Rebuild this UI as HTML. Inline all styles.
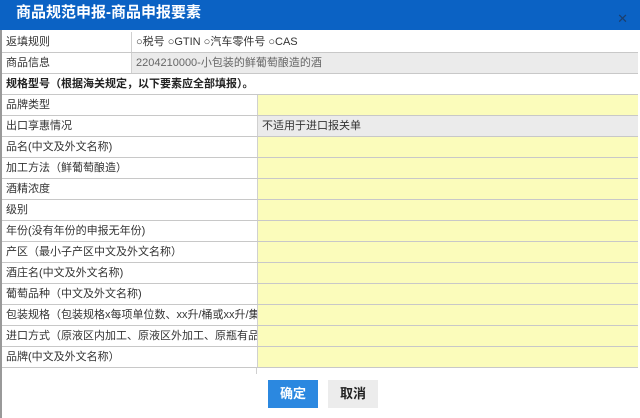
<!DOCTYPE html><html><head><meta charset="utf-8"><style>
body{margin:0;width:640px;height:418px;background:#fff;font-family:"Liberation Sans","Noto Sans CJK SC",sans-serif;font-size:11px;color:#333;position:relative;overflow:hidden}
.t{position:absolute;left:0;top:0;width:640px;height:30px;background:#0b62c4;color:#fff;font-size:15px;font-weight:bold;line-height:26px;text-indent:16px}
.x{position:absolute;right:12px;top:6px;color:#1c3f6e;font-size:13px;font-weight:normal}
.r{position:absolute;left:2px;width:636px;height:20px;border-bottom:1px solid #c8c8c8;line-height:20px}
.r span{position:absolute;top:0;height:20px;padding-left:4px;box-sizing:border-box}
.a{left:0;border-right:1px solid #d0d0d0}
.y{background:#fbfcbb}.g{background:#ebebeb}
.b{position:absolute;top:380px;height:28px;width:50px;line-height:28px;text-align:center;font-size:13px;font-weight:bold}
</style></head><body>
<div class="t">商品规范申报-商品申报要素<span class="x">✕</span></div>
<div style="position:absolute;left:0;top:30px;width:2px;height:388px;background:#999"></div>
<div class="r" style="top:32px"><span class="a" style="width:130px">返填规则</span><span style="left:130px">○税号 ○GTIN ○汽车零件号 ○CAS</span></div>
<div class="r" style="top:53px"><span class="a" style="width:130px">商品信息</span><span class="g" style="left:130px;width:506px;color:#666">2204210000-小包装的鲜葡萄酿造的酒</span></div>
<div class="r" style="top:74px;font-weight:bold;color:#222"><span>规格型号（根据海关规定，以下要素应全部填报）。</span></div>
<div class="r" style="top:95px"><span class="a" style="width:256px">品牌类型</span><span class="y" style="left:256px;width:380px"></span></div>
<div class="r" style="top:116px"><span class="a" style="width:256px">出口享惠情况</span><span class="g" style="left:256px;width:380px">不适用于进口报关单</span></div>
<div class="r" style="top:137px"><span class="a" style="width:256px">品名(中文及外文名称)</span><span class="y" style="left:256px;width:380px"></span></div>
<div class="r" style="top:158px"><span class="a" style="width:256px">加工方法（鲜葡萄酿造）</span><span class="y" style="left:256px;width:380px"></span></div>
<div class="r" style="top:179px"><span class="a" style="width:256px">酒精浓度</span><span class="y" style="left:256px;width:380px"></span></div>
<div class="r" style="top:200px"><span class="a" style="width:256px">级别</span><span class="y" style="left:256px;width:380px"></span></div>
<div class="r" style="top:221px"><span class="a" style="width:256px">年份(没有年份的申报无年份)</span><span class="y" style="left:256px;width:380px"></span></div>
<div class="r" style="top:242px"><span class="a" style="width:256px">产区（最小子产区中文及外文名称）</span><span class="y" style="left:256px;width:380px"></span></div>
<div class="r" style="top:263px"><span class="a" style="width:256px">酒庄名(中文及外文名称)</span><span class="y" style="left:256px;width:380px"></span></div>
<div class="r" style="top:284px"><span class="a" style="width:256px">葡萄品种（中文及外文名称)</span><span class="y" style="left:256px;width:380px"></span></div>
<div class="r" style="top:305px"><span class="a" style="width:256px;overflow:hidden;white-space:nowrap">包装规格（包装规格x每项单位数、xx升/桶或xx升/集装</span><span class="y" style="left:256px;width:380px"></span></div>
<div class="r" style="top:326px"><span class="a" style="width:256px;overflow:hidden;white-space:nowrap">进口方式（原液区内加工、原液区外加工、原瓶有品牌、</span><span class="y" style="left:256px;width:380px"></span></div>
<div class="r" style="top:347px"><span class="a" style="width:256px">品牌(中文及外文名称）</span><span class="y" style="left:256px;width:380px"></span></div>
<div style="position:absolute;left:256px;top:368px;width:1px;height:6px;background:#d0d0d0"></div>
<div class="b" style="left:268px;background:#2b88e0;color:#fff">确定</div>
<div class="b" style="left:328px;background:#ececec;color:#222">取消</div>
</body></html>
